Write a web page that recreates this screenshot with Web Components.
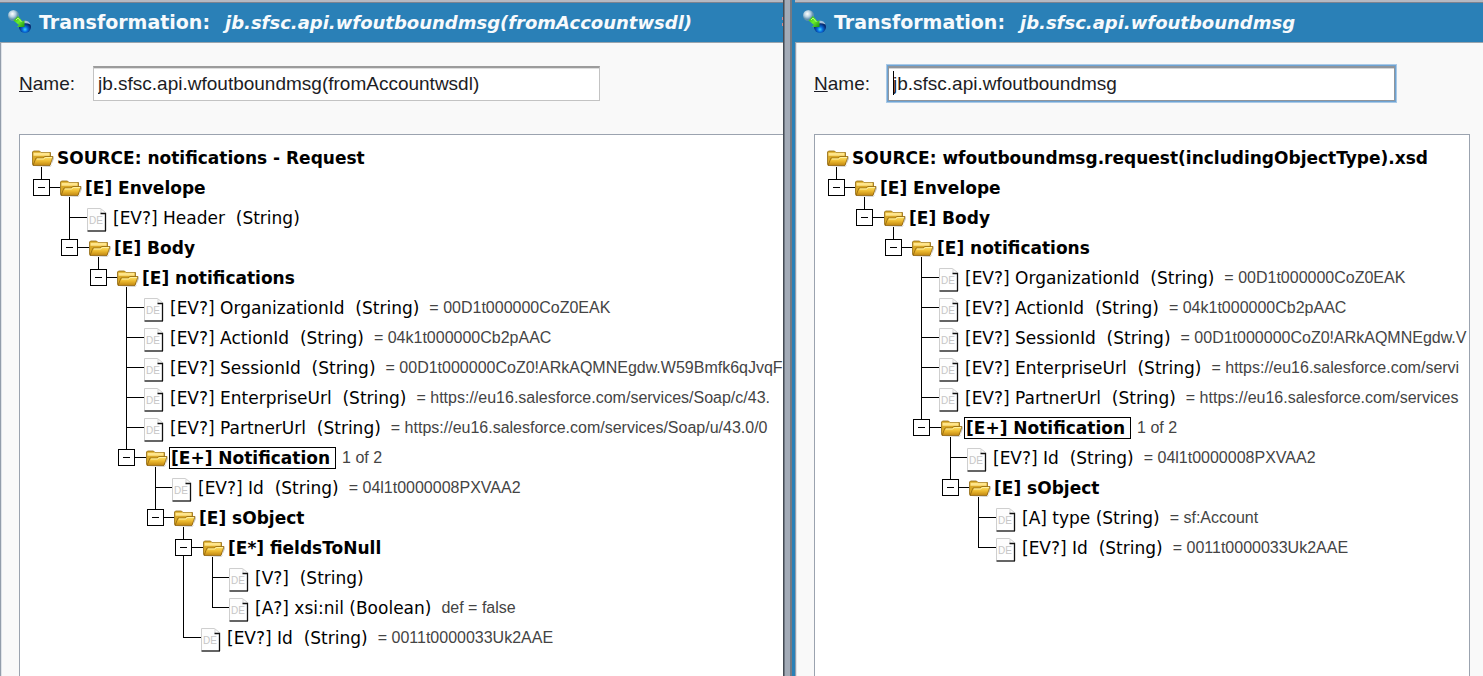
<!DOCTYPE html>
<html lang="en">
<head>
<meta charset="utf-8">
<title>Transformation</title>
<style>
  body { margin: 0; background: #f9f9f9; font-family: "Liberation Sans", Arial, sans-serif; }
</style>
</head>
<body>
<compare-desk>
  <transform-window heading="jb.sfsc.api.wfoutboundmsg(fromAccountwsdl)" cut>
    <name-field slot="name" value="jb.sfsc.api.wfoutboundmsg(fromAccountwsdl)"></name-field>
    <schema-tree cut>
      <tree-node root><span slot="label">SOURCE: notifications - Request</span>
        <tree-node><span slot="label">[E] Envelope</span>
          <tree-node leaf><span slot="label">[EV?] Header  (String)</span></tree-node>
          <tree-node><span slot="label">[E] Body</span>
            <tree-node><span slot="label">[E] notifications</span>
              <tree-node leaf><span slot="label">[EV?] OrganizationId  (String)</span><span slot="value">= 00D1t000000CoZ0EAK</span></tree-node>
              <tree-node leaf><span slot="label">[EV?] ActionId  (String)</span><span slot="value">= 04k1t000000Cb2pAAC</span></tree-node>
              <tree-node leaf><span slot="label">[EV?] SessionId  (String)</span><span slot="value">= 00D1t000000CoZ0!ARkAQMNEgdw.W59Bmfk6qJvqF</span></tree-node>
              <tree-node leaf><span slot="label">[EV?] EnterpriseUrl  (String)</span><span slot="value">= https://eu16.salesforce.com/services/Soap/c/43.</span></tree-node>
              <tree-node leaf><span slot="label">[EV?] PartnerUrl  (String)</span><span slot="value">= https://eu16.salesforce.com/services/Soap/u/43.0/0</span></tree-node>
              <tree-node selected><span slot="label">[E+] Notification</span><span slot="value">1 of 2</span>
                <tree-node leaf><span slot="label">[EV?] Id  (String)</span><span slot="value">= 04l1t0000008PXVAA2</span></tree-node>
                <tree-node><span slot="label">[E] sObject</span>
                  <tree-node><span slot="label">[E*] fieldsToNull</span>
                    <tree-node leaf><span slot="label">[V?]  (String)</span></tree-node>
                    <tree-node leaf><span slot="label">[A?] xsi:nil (Boolean)</span><span slot="value">def = false</span></tree-node>
                  </tree-node>
                  <tree-node leaf><span slot="label">[EV?] Id  (String)</span><span slot="value">= 0011t0000033Uk2AAE</span></tree-node>
                </tree-node>
              </tree-node>
            </tree-node>
          </tree-node>
        </tree-node>
      </tree-node>
    </schema-tree>
  </transform-window>

  <transform-window heading="jb.sfsc.api.wfoutboundmsg" framed>
    <name-field slot="name" value="jb.sfsc.api.wfoutboundmsg" active></name-field>
    <schema-tree>
      <tree-node root><span slot="label">SOURCE: wfoutboundmsg.request(includingObjectType).xsd</span>
        <tree-node><span slot="label">[E] Envelope</span>
          <tree-node><span slot="label">[E] Body</span>
            <tree-node><span slot="label">[E] notifications</span>
              <tree-node leaf><span slot="label">[EV?] OrganizationId  (String)</span><span slot="value">= 00D1t000000CoZ0EAK</span></tree-node>
              <tree-node leaf><span slot="label">[EV?] ActionId  (String)</span><span slot="value">= 04k1t000000Cb2pAAC</span></tree-node>
              <tree-node leaf><span slot="label">[EV?] SessionId  (String)</span><span slot="value">= 00D1t000000CoZ0!ARkAQMNEgdw.V</span></tree-node>
              <tree-node leaf><span slot="label">[EV?] EnterpriseUrl  (String)</span><span slot="value">= https://eu16.salesforce.com/servi</span></tree-node>
              <tree-node leaf><span slot="label">[EV?] PartnerUrl  (String)</span><span slot="value">= https://eu16.salesforce.com/services</span></tree-node>
              <tree-node selected><span slot="label">[E+] Notification</span><span slot="value">1 of 2</span>
                <tree-node leaf><span slot="label">[EV?] Id  (String)</span><span slot="value">= 04l1t0000008PXVAA2</span></tree-node>
                <tree-node><span slot="label">[E] sObject</span>
                  <tree-node leaf><span slot="label">[A] type (String)</span><span slot="value">= sf:Account</span></tree-node>
                  <tree-node leaf><span slot="label">[EV?] Id  (String)</span><span slot="value">= 0011t0000033Uk2AAE</span></tree-node>
                </tree-node>
              </tree-node>
            </tree-node>
          </tree-node>
        </tree-node>
      </tree-node>
    </schema-tree>
  </transform-window>
</compare-desk>

<script>
const shadow = (el, html) => { el.attachShadow({ mode: "open" }).innerHTML = html; return el.shadowRoot; };

customElements.define("compare-desk", class extends HTMLElement {
  connectedCallback() {
    if (this.shadowRoot) return;
    shadow(this, `<style>
      :host { display: grid; grid-template-columns: minmax(0, 783fr) minmax(0, 700fr); min-height: 100vh; }
    </style><slot></slot>`);
  }
});

customElements.define("transform-window", class extends HTMLElement {
  connectedCallback() {
    if (this.shadowRoot) return;
    shadow(this, `<style>
      :host { display: flex; min-width: 0; background: #f9f9f9; }
      .frame { display: none; flex: none; width: 12px; box-sizing: border-box;
        background: linear-gradient(90deg, #454b54 0 1px, #6f7782 1px 2px, #a3abb7 2px 7px, #747a84 7px 9px, #2a80b7 9px); }
      :host([framed]) .frame { display: block; }
      .pane { flex: 1; min-width: 0; display: flex; flex-direction: column; }
      header { display: flex; align-items: center; gap: 7px; height: 40px; box-sizing: content-box; padding: 0 0 0 8px; white-space: pre;
        border-top: 2px solid #b5b9c2; border-bottom: 1px solid #9aa5ae; background: #2a80b7; color: #f7fafc;
        box-shadow: inset 0 1px #7d8390; }
      h1 { margin: 0; font: bold 19px/24px "DejaVu Sans", Verdana, sans-serif; display: flex; gap: 15px; align-items: baseline; }
      em { font-size: 18px; }
      .edge { display: none; margin-left: auto; }
      :host([cut]) .edge { display: block; }
      main { flex: 1; display: flex; flex-direction: column; gap: 33px; padding: 23px 13px 0 18px; border-left: 1px solid #929dab;
        box-shadow: inset 1px 0 #dfe3e8; }
      :host([cut]) main { padding-right: 0; }
    </style>
    <div class="frame"></div>
    <div class="pane">
      <header>
        <svg width="24" height="24" viewBox="0 0 24 24" aria-hidden="true">
          <defs>
            <radialGradient id="a" cx=".4" cy=".35"><stop offset="0" stop-color="#fff"/><stop offset=".55" stop-color="#b9d3e2"/><stop offset="1" stop-color="#5f8fae"/></radialGradient>
            <radialGradient id="b" cx=".5" cy=".7"><stop offset="0" stop-color="#35d2ff"/><stop offset=".45" stop-color="#0869d8"/><stop offset="1" stop-color="#06286c"/></radialGradient>
            <linearGradient id="c" x2="1" y2="1"><stop offset="0" stop-color="#27a818"/><stop offset=".5" stop-color="#6bf02a"/><stop offset="1" stop-color="#1b8f14"/></linearGradient>
          </defs>
          <circle cx="5.500" cy="5.500" r="5.500" fill="url(#a)"/>
          <circle cx="17" cy="17" r="6" fill="url(#b)"/>
          <path d="M12 14.500a5.500 5.500 0 0 1 10.500 0q-5-2.500-10.500 0z" fill="#c4dced" opacity=".85"/>
          <path d="M5.500 10.500L10 6l4.500 5.500L16.500 10v7H9l2-2z" fill="url(#c)"/>
          <path d="M8 10l2-2 3.500 4" fill="none" stroke="#b6ff72" stroke-width="1"/>
        </svg>
        <h1><span>Transformation:</span><em>${this.getAttribute("heading")}</em></h1>
        <svg class="edge" width="2" height="12" viewBox="0 0 2 12" aria-hidden="true"><path d="M1 1h1v3H1zM1 7h1v3H1z" fill="#c98b92"/></svg>
      </header>
      <main><slot name="name"></slot><slot></slot></main>
    </div>`);
  }
});

customElements.define("name-field", class extends HTMLElement {
  connectedCallback() {
    if (this.shadowRoot) return;
    shadow(this, `<style>
      :host { display: flex; align-items: center; color: #1c1c24; font: 19px/24px "Liberation Sans", Arial, sans-serif; }
      label { width: 74px; flex: none; }
      .box { position: relative; flex: 0 1 507px; min-width: 0; }
      input { display: block; width: 100%; height: 35px; box-sizing: border-box; margin: 0; padding: 0 4px; font: inherit; color: inherit;
        background: #fff; border: 1px solid #c3c3c3; border-top: 2px solid #9c9c9c; border-radius: 0; outline: none;
        box-shadow: inset 0 1px #dedede; }
      :host([active]) input { border-color: #8f959c; box-shadow: 0 0 0 1px #6ea3d3, 0 0 0 2px #a9c9e6, inset 0 1px #d5d5d5; }
      .caret { display: none; position: absolute; left: 5px; top: 5px; width: 1px; height: 24px; background: #000; }
      :host([active]) .caret { display: block; }
    </style>
    <label for="n"><u>N</u>ame:</label>
    <div class="box"><input id="n" type="text" spellcheck="false"><span class="caret"></span></div>`)
      .querySelector("input").value = this.getAttribute("value");
  }
});

customElements.define("schema-tree", class extends HTMLElement {
  connectedCallback() {
    if (this.shadowRoot) return;
    this.setAttribute("role", "tree");
    shadow(this, `<style>
      :host { display: block; flex: 1; min-width: 0; overflow: hidden; box-sizing: border-box; padding: 8px 0 8px 12px;
        background: #fff; border: solid #9ba3af; border-width: 1px 1px 0 1px; }
      :host([cut]) { border-right: 0; }
    </style><slot></slot>`);
  }
});

const FOLDER = `<svg class="folder" width="22" height="18" viewBox="0 0 22 18" aria-hidden="true">
  <defs><linearGradient id="f" y2="1" x2="0"><stop offset="0" stop-color="#ffe672"/><stop offset=".5" stop-color="#edbb30"/><stop offset="1" stop-color="#c08612"/></linearGradient></defs>
  <path d="M2 17h16.500l4-9.500-2-.500-1 9z" fill="#777" opacity=".4"/>
  <path d="M.5 14.500V2L1.500 1h6l1.500 1.500h9.500V14z" fill="#d9a827" stroke="#926a13" stroke-width=".8"/>
  <path d="M1.500 3.500h16M1.500 5h16" stroke="#ffe58a" stroke-width="1.500"/>
  <path d="M1 15.500L4 8H11l2-1.500h8L18 15.500z" fill="url(#f)" stroke="#8f620a" stroke-width=".8"/>
  <path d="M5 9h6.500l2-1.500H20" fill="none" stroke="#fff0a0" stroke-width="1"/>
</svg>`;
const DOC = `<svg class="doc" width="20" height="24" viewBox="0 0 20 24" aria-hidden="true">
  <path d="M.5 22.500V.5h13l5 4" fill="#fdfdfd" stroke="#cfcfcf"/>
  <path d="M14 1v4" stroke="#d5d5d5" fill="none"/>
  <path d="M13.500 5.500h5V23" fill="none" stroke="#111" stroke-width="1.300"/>
  <path d="M.5 23H19" stroke="#111" stroke-width="1.300"/>
  <text x="2" y="16" font-family="Liberation Sans, sans-serif" font-size="10" fill="#c6c6c6">DE</text>
</svg>`;

customElements.define("tree-node", class extends HTMLElement {
  connectedCallback() {
    if (this.shadowRoot) return;
    let depth = 0;
    for (let p = this.parentElement; p && p.localName === "tree-node"; p = p.parentElement) depth++;
    const leaf = this.hasAttribute("leaf"), root = this.hasAttribute("root");
    this.setAttribute("role", "treeitem");
    this.style.setProperty("--step", depth % 2 ? "28px" : "29px");
    const stem = root ? "" : leaf ? `<span class="wire"></span>`
      : `<button type="button" aria-label="Collapse"></button><span class="wire"></span>`;
    shadow(this, `<style>
      :host { display: block; position: relative; }
      :host::before { content: ""; position: absolute; left: 9px; top: -6px; bottom: 0; width: 1px; background: #000; }
      :host(:last-child)::before { bottom: auto; height: 21px; }
      :host([root])::before { display: none; }
      .row { display: flex; align-items: center; height: 30px; white-space: pre; }
      .stem { display: flex; align-items: center; flex: none; box-sizing: border-box; width: var(--step); height: 30px; padding: 0 0 1px 1px; }
      :host([root]) .stem { display: none; }
      :host([leaf]) .stem { padding: 0 2px 1px 9px; }
      button { position: relative; flex: none; width: 17px; height: 17px; padding: 0; border: 1px solid #000; border-radius: 0;
        background: linear-gradient(#000, #000) center / 7px 1px no-repeat #fff; }
      .wire { flex: 1; height: 1px; background: #000; }
      svg { display: block; flex: none; }
      .folder { margin: 2px 3px 0 0; }
      .doc { margin: 4px 6px 0 -2px; }
      .label { color: #000; font: bold 17px/20px "DejaVu Sans", Verdana, sans-serif; }
      :host([leaf]) .label { font-weight: normal; }
      :host([selected]) .label { border: 1px solid #000; padding: 0 5px 0 1px; margin-left: -2px; }
      .value { margin-left: 10px; color: #444; font: 16px/20px "Liberation Sans", Arial, sans-serif; }
      :host([selected]) .value { margin-left: 6px; }
      .kids { margin-left: var(--step); }
      :host([root]) .kids { margin-left: 0; }
    </style>
    <div class="row"><span class="stem">${stem}</span>${leaf ? DOC : FOLDER}<span class="label"><slot name="label"></slot></span><span class="value"><slot name="value"></slot></span></div>
    ${leaf ? "" : `<div class="kids" role="group"><slot></slot></div>`}`);
  }
});
</script>
</body>
</html>
